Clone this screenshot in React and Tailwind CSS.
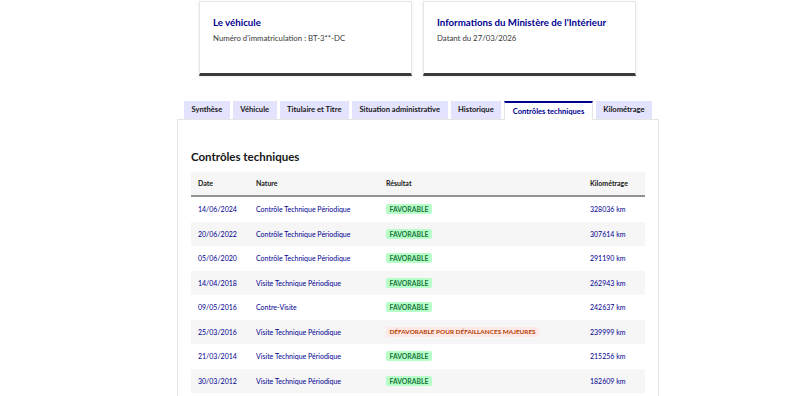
import React from "react";

const rows = [
  ["14/06/2024", "Contrôle Technique Périodique", "ok", "328036 km"],
  ["20/06/2022", "Contrôle Technique Périodique", "ok", "307614 km"],
  ["05/06/2020", "Contrôle Technique Périodique", "ok", "291190 km"],
  ["14/04/2018", "Visite Technique Périodique", "ok", "262943 km"],
  ["09/05/2016", "Contre-Visite", "ok", "242637 km"],
  ["25/03/2016", "Visite Technique Périodique", "ko", "239999 km"],
  ["21/03/2014", "Visite Technique Périodique", "ok", "215256 km"],
  ["30/03/2012", "Visite Technique Périodique", "ok", "182609 km"],
];

const tabs = [
  "Synthèse",
  "Véhicule",
  "Titulaire et Titre",
  "Situation administrative",
  "Historique",
  "Contrôles techniques",
  "Kilométrage",
];

export default function App() {
  return (
    <div
      className="w-[800px] h-[396px] overflow-hidden bg-white flex flex-col"
      style={{ fontFamily: 'Lato, "Open Sans", sans-serif' }}
    >
      <div className="flex gap-[11px] pl-[199px] pt-[1px]">
        <div className="w-[213px] h-[75px] border border-[#e5e5e5] border-b-[3px] border-b-[#3a3a3a] shadow-[0_1px_3px_rgba(0,0,0,0.08)] pl-[13px] pt-[12px]">
          <div className="text-[9.7px] font-bold text-[#000091] leading-[16px] whitespace-nowrap">Le véhicule</div>
          <div className="text-[7.8px] text-[#3a3a3a] mt-[2px] leading-[12px] whitespace-nowrap">Numéro d'immatriculation : BT-3**-DC</div>
        </div>
        <div className="w-[213px] h-[75px] border border-[#e5e5e5] border-b-[3px] border-b-[#3a3a3a] shadow-[0_1px_3px_rgba(0,0,0,0.08)] pl-[13px] pt-[12px]">
          <div className="text-[9.7px] font-bold text-[#000091] leading-[16px] whitespace-nowrap">Informations du Ministère de l'Intérieur</div>
          <div className="text-[7.8px] text-[#3a3a3a] mt-[2px] leading-[12px] whitespace-nowrap">Datant du 27/03/2026</div>
        </div>
      </div>

      <div className="ml-[177px] mt-[25px] w-[482px] flex flex-col">
        <div className="flex gap-[3px] pl-[7px] relative z-10">
          {tabs.map((t) => {
            const active = t === "Contrôles techniques";
            return active ? (
              <div
                key={t}
                className="h-[19px] px-[7.5px] flex items-center bg-white border-t-2 border-t-[#000091] border-x border-x-[#e5e5e5] text-[7.6px] font-bold text-[#000091] -mb-px whitespace-nowrap"
              >
                {t}
              </div>
            ) : (
              <div
                key={t}
                className="h-[18px] px-[7.5px] flex items-center bg-[#e3e3fd] text-[7.6px] font-bold text-[#161616] whitespace-nowrap"
              >
                {t}
              </div>
            );
          })}
        </div>
        <div className="border border-[#e5e5e5] pt-[28px] px-[13px] h-[300px]">
          <h2 className="text-[11.5px] font-bold text-[#161616] leading-[18px]">Contrôles techniques</h2>
          <div className="mt-[6px] w-[454px]">
            <div className="grid grid-cols-[58px_130px_204px_1fr] pl-[7px] h-[25px] items-center bg-[#f6f6f6] border-b-2 border-b-[#929292] text-[7px] font-bold text-[#161616]">
              <div>Date</div>
              <div>Nature</div>
              <div>Résultat</div>
              <div>Kilométrage</div>
            </div>
            {rows.map((r, i) => (
              <div
                key={i}
                className={`grid grid-cols-[58px_130px_204px_1fr] pl-[7px] h-[24.5px] items-center text-[7px] text-[#000091] ${i % 2 === 1 ? "bg-[#f6f6f6]" : "bg-white"}`}
              >
                <div>{r[0]}</div>
                <div>{r[1]}</div>
                <div className="flex">
                  {r[2] === "ok" ? (
                    <span className="bg-[#b8fec9] text-[#18753c] font-bold uppercase text-[6.8px] leading-[10px] px-[3.5px] rounded-[2px]">Favorable</span>
                  ) : (
                    <span className="bg-[#ffe9e6] text-[#b34000] font-bold uppercase text-[6.4px] leading-[10px] px-[3.5px] rounded-[2px]">Défavorable pour défaillances majeures</span>
                  )}
                </div>
                <div>{r[3]}</div>
              </div>
            ))}
          </div>
        </div>
      </div>
    </div>
  );
}
